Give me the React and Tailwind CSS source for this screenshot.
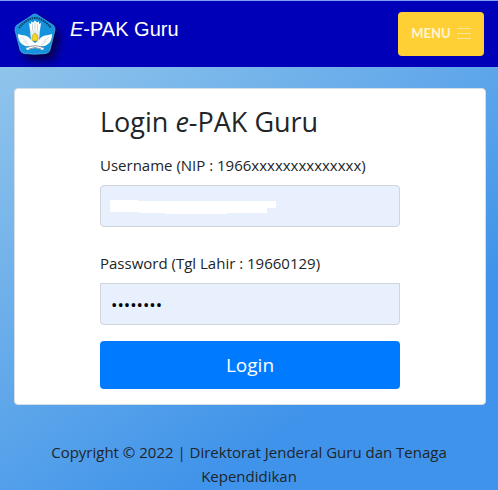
function Logo() {
  return (
    <svg viewBox="0 0 42 42" className="size-[42px] drop-shadow-[5px_6px_4px_rgba(10,0,30,0.7)]" role="img" aria-label="Tut Wuri Handayani">
      <path d="M21 1 Q23 1 25 3 L39 12 Q41.500 14 41 17 L36 37 Q35 40 32 40.500 Q21 42 10 40.500 Q7 40 6 37 L1 17 Q.5 14 3 12 L17 3 Q19 1 21 1Z" fill="#1593dc" stroke="#5bb3e0" strokeWidth=".7" />
      <path d="M5 15 Q21 -5 37 15" fill="none" stroke="#123d66" strokeWidth="2" strokeDasharray="1.500 .8" />
      <path d="M16 17 L15 10 L17 11 L17 8.500 L19 9.500 L21 7.500 L23 9.500 L25 8.500 L25 11 L27 10 L26 17Z" fill="#fff" />
      <path d="M18.500 11V17M21 10V17M23.500 11V17" stroke="#a9b9c4" strokeWidth=".6" />
      <path d="M16 17H26L25 28H17Z" fill="#e8edf0" />
      <path d="M17 27 C13 21 9 23 4 21 C4 25 5 29 8 31 C11 34 14 33 16 33 L12 35 L13 37 L21 35 L29 37 L30 35 L26 33 C28 33 31 34 34 31 C37 29 38 25 38 21 C33 23 29 21 25 27 L21 30Z" fill="#fff" />
      <path d="M7 24L13 29M9 28L15 32M35 24L29 29M33 28L27 32" stroke="#9cc0d5" strokeWidth=".5" />
      <path d="M21 20 C24 22 25 25 23 28 H19 C17 25 18 22 21 20Z" fill="#f2d51c" stroke="#8c8b35" strokeWidth=".5" />
      <path d="M13 34.500 Q21 31 29 34.500 M15 36 Q21 33 27 36" fill="none" stroke="#4c5860" strokeWidth=".6" />
    </svg>
  );
}

function MenuIcon() {
  return (
    <svg viewBox="0 0 14 14" className="size-3.5" fill="none" stroke="#ffe69a" aria-hidden="true">
      <path d="M0 2.500H14M0 7.500H14M0 12.500H14" />
    </svg>
  );
}

const inputClass =
  "block h-[42px] w-full border border-[#ced4da] bg-[#e8f0fe] px-2.5 text-black outline-none";

export default function App() {
  return (
    <div className="min-h-screen bg-[linear-gradient(145deg,#99c9ea_0%,#8fc4eb_9%,#3f93ea_75%)] font-['Open_Sans','Noto_Sans',sans-serif] text-[15px] leading-6 text-[#212529]">
      <header className="flex h-[67px] items-start justify-between border-t border-[#7da2f5] bg-[#0000b8] px-3.5">
        <a href="#home" className="flex items-start gap-3.5 pt-3 font-['Liberation_Sans',sans-serif] text-xl text-white">
          <Logo />
          <span className="pt-1 leading-6"><em>E</em>-PAK Guru</span>
        </a>
        <button type="button" className="mt-[11px] flex h-11 w-[86px] items-center justify-center gap-1.5 rounded bg-[#ffd036] pb-0.5 font-['Lato',sans-serif] text-[13px] font-bold text-[#fff5d2]">
          MENU <MenuIcon />
        </button>
      </header>
      <main className="pt-[21px] pr-3 pl-3.5">
        <section className="rounded border border-[#d5dde5] bg-white pt-4 pb-[15px]">
          <form className="mx-auto w-[300px]" onSubmit={(e) => e.preventDefault()}>
            <h1 className="text-[27px] leading-[34px]">Login <em>e</em>-PAK Guru</h1>
            <label htmlFor="username" className="mt-3.5 mb-2 block whitespace-nowrap">
              Username (NIP : 1966xxxxxxxxxxxxxx)
            </label>
            <div className="relative">
              <input id="username" type="text" autoComplete="off" className={`${inputClass} rounded text-base`} />
              <svg viewBox="0 0 166 15" className="pointer-events-none absolute top-[15px] left-2.5 h-[15px] w-[166px]" aria-hidden="true">
                <path d="M0 0H28V1H166V8H157V13H117V14H56V13H30V12H0Z" fill="#fff" />
              </svg>
            </div>
            <label htmlFor="password" className="mt-6 mb-2 block">Password (Tgl Lahir : 19660129)</label>
            <input id="password" type="password" defaultValue="19660129" className={`${inputClass} rounded-b text-[17px]`} />
            <button type="submit" className="mt-4 h-12 w-full rounded bg-[#007bff] text-[19px] text-white">Login</button>
          </form>
        </section>
      </main>
      <footer className="px-8 pt-[35px] text-center">
        Copyright © 2022 | Direktorat Jenderal Guru dan Tenaga Kependidikan
      </footer>
    </div>
  );
}
